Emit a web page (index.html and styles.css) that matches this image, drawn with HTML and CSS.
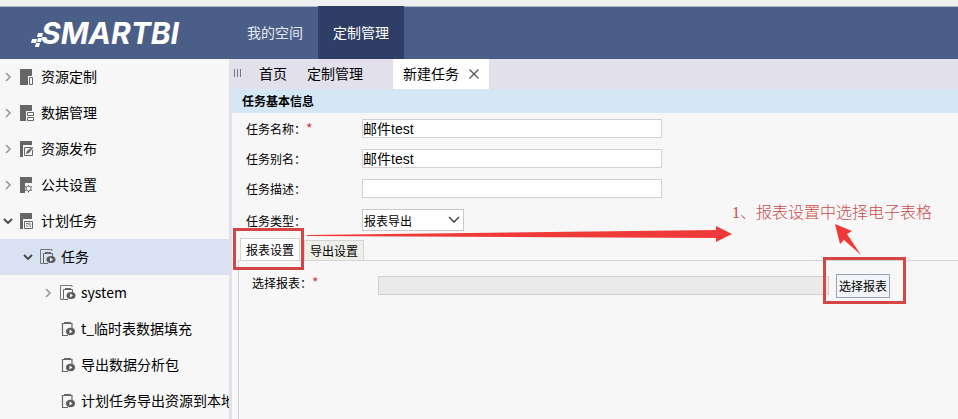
FILE: index.html
```html
<!DOCTYPE html>
<html lang="zh-CN">
<head>
    <meta charset="utf-8">
    <title>SMARTBI</title>
    <link rel="stylesheet" href="styles.css">
</head>
<body>
    <svg class="symbols" width="0" height="0">
        <symbol id="right" viewBox="0 0 10 10"><path d="M3 1l4 4-4 4" fill="none" stroke="#999" stroke-width="1.6"/></symbol>
        <symbol id="down" viewBox="0 0 10 10"><path d="M1 3l4 4 4-4" fill="none" stroke="#444" stroke-width="1.8"/></symbol>
        <symbol id="folder" viewBox="0 0 16 16">
            <path d="M3 14.500H.5V.5H12V2" fill="none" stroke="#777"/>
            <path d="M8 14.500H3.500V4.500h9V8" fill="none" stroke="#666"/>
            <path d="M5 3h6v2H5z" fill="#666"/>
            <ellipse cx="11" cy="10.500" rx="4.500" ry="3.500" fill="#5c5c5c"/>
            <path d="M10 8.500v4l3-2z" fill="#fff"/>
        </symbol>
        <symbol id="task" viewBox="0 0 16 16">
            <path d="M8 14.500H2.500V2.500H12V7" fill="none" stroke="#666" stroke-width="1.200"/>
            <path d="M4 1h7v2H4z" fill="#666"/>
            <ellipse cx="10.500" cy="10.500" rx="4.500" ry="3.700" fill="#5c5c5c"/>
            <path d="M9.500 8.500v4l3-2z" fill="#fff"/>
        </symbol>
    </svg>

    <header class="header">
        <a class="logo" href="#">
            <svg class="logo-mark" width="13" height="14" viewBox="0 0 13 14" fill="#fff">
                <path d="M7 0h5l-1 4H6zM1 6h5L5 10H0zM7 5h4l-1 4H6zM5 10h4l-1 4H4z"/>
            </svg>
            <span>SMARTBI</span>
        </a>
        <nav class="nav">
            <a class="nav-item" href="#">我的空间</a>
            <a class="nav-item active" href="#">定制管理</a>
        </nav>
    </header>

    <div class="body">
        <aside class="sidebar">
            <a class="node" href="#">
                <svg class="arrow"><use href="#right"/></svg>
                <svg class="icon" viewBox="0 0 16 16"><path d="M0 0h12v7H8v9H0z" fill="#666"/><path d="M9.500 8.500h3v7h-3z" fill="none" stroke="#666"/></svg>
                <span>资源定制</span>
            </a>
            <a class="node" href="#">
                <svg class="arrow"><use href="#right"/></svg>
                <svg class="icon" viewBox="0 0 16 16"><path d="M0 0h12v6H6v10H0z" fill="#666"/><path d="M7.500 7.500h6v3h-6zM7.500 12.500h6v3h-6z" fill="none" stroke="#666"/></svg>
                <span>数据管理</span>
            </a>
            <a class="node" href="#">
                <svg class="arrow"><use href="#right"/></svg>
                <svg class="icon" viewBox="0 0 16 16"><path d="M0 0h12v4H3v12H0z" fill="#666"/><path d="M11 6.500H4.500v8h8V9M6.500 12.500l6-6" fill="none" stroke="#666"/><path d="M6 13l1-3 5-4 1 1-4 5z" fill="#666"/></svg>
                <span>资源发布</span>
            </a>
            <a class="node" href="#">
                <svg class="arrow"><use href="#right"/></svg>
                <svg class="icon" viewBox="0 0 16 16"><path d="M0 0h12v6H5v10H0z" fill="#666"/><circle cx="8.500" cy="11.500" r="2.500" fill="none" stroke="#666"/><path d="M8.500 8v1M8.500 14v1.500M5 9.500l1 .5M11 13l1 .5M5 13.500l1-.5M11 10l1-.5" stroke="#666"/></svg>
                <span>公共设置</span>
            </a>
            <a class="node" href="#">
                <svg class="arrow"><use href="#down"/></svg>
                <svg class="icon" viewBox="0 0 16 16"><path d="M0 0h12v6H3v10H0z" fill="#666"/><path d="M4.500 8.500h8v7h-8zM6 10.500c3 0 4 1 4.500 3.500M6 12.500c1 0 1.500.5 2 1.500M9 9.500l2 2" fill="none" stroke="#666"/></svg>
                <span>计划任务</span>
            </a>
            <a class="node level-2 selected" href="#">
                <svg class="arrow"><use href="#down"/></svg>
                <svg class="icon"><use href="#folder"/></svg>
                <span>任务</span>
            </a>
            <a class="node level-3" href="#">
                <svg class="arrow"><use href="#right"/></svg>
                <svg class="icon"><use href="#folder"/></svg>
                <span>system</span>
            </a>
            <a class="node level-3" href="#">
                <svg class="arrow"></svg>
                <svg class="icon"><use href="#task"/></svg>
                <span>t_临时表数据填充</span>
            </a>
            <a class="node level-3" href="#">
                <svg class="arrow"></svg>
                <svg class="icon"><use href="#task"/></svg>
                <span>导出数据分析包</span>
            </a>
            <a class="node level-3" href="#">
                <svg class="arrow"></svg>
                <svg class="icon"><use href="#task"/></svg>
                <span>计划任务导出资源到本地</span>
            </a>
        </aside>

        <main class="main">
            <div class="tabs">
                <svg class="grip" width="8" height="8" viewBox="0 0 8 8"><path d="M.5 0v8M3.500 0v8M6.500 0v8" stroke="#777"/></svg>
                <a class="tab" href="#">首页</a>
                <a class="tab" href="#">定制管理</a>
                <div class="tab current">
                    <span>新建任务</span>
                    <button class="close" aria-label="关闭">
                        <svg width="10" height="10" viewBox="0 0 10 10"><path d="M.5.5l9 9M9.500.5l-9 9" stroke="#555" stroke-width="1.300"/></svg>
                    </button>
                </div>
            </div>

            <div class="content">
                <h2 class="title">任务基本信息</h2>
                <form class="form">
                    <div class="row">
                        <label for="name">任务名称：<em>*</em></label>
                        <input type="text" id="name" value="邮件test">
                    </div>
                    <div class="row">
                        <label for="alias">任务别名：</label>
                        <input type="text" id="alias" value="邮件test">
                    </div>
                    <div class="row">
                        <label for="desc">任务描述：</label>
                        <input type="text" id="desc">
                    </div>
                    <div class="row type-row">
                        <label for="type">任务类型：</label>
                        <div class="select">
                            <select id="type"><option>报表导出</option></select>
                            <svg width="12" height="8" viewBox="0 0 12 8"><path d="M1 1l5 5 5-5" fill="none" stroke="#333" stroke-width="1.300"/></svg>
                        </div>
                    </div>

                    <div class="sub-tabs">
                        <button type="button" class="sub-tab on">报表设置</button>
                        <button type="button" class="sub-tab">导出设置</button>
                    </div>
                    <div class="panel">
                        <label for="report">选择报表：<em>*</em></label>
                        <input type="text" id="report" disabled>
                        <button type="button" class="choose">选择报表</button>
                    </div>
                </form>

                <!-- notes drawn over the form -->
                <div class="box box-tab"></div>
                <div class="box box-button"></div>
                <svg class="arrows" width="640" height="60" viewBox="0 0 640 60" fill="#f03a3a">
                    <path d="M0 15L409 10V6l16 8-16 8v-4L0 16z"/>
                    <path d="M528 4l17 7-5 3 14 21-17-15-4 4z"/>
                </svg>
                <p class="note">1、报表设置中选择电子表格</p>
            </div>
        </main>
    </div>
</body>
</html>
```
FILE: styles.css
```css
* {
    box-sizing: border-box;
}
body {
    margin: 0;
    min-height: 100vh;
    display: flex;
    flex-direction: column;
    overflow: hidden;
    background-color: #f7f7f7;
    color: #000;
    font-family: "Noto Sans CJK SC", sans-serif;
    font-size: 14px;
}
a {
    color: inherit;
    text-decoration: none;
}
button, input, select {
    font-family: inherit;
    color: inherit;
    margin: 0;
}
.symbols {
    position: absolute;
}

/* header */
.header {
    display: flex;
    height: 59px;
    border-top: 6px solid #f0f0f0;
    box-shadow: inset 0 1px 0 #a9b6c6;
    background-color: #4b5e88;
    color: #fff;
}
.logo {
    display: flex;
    align-items: center;
    width: 232px;
    padding-left: 31px;
    font-family: Inter, sans-serif;
    font-size: 30px;
    font-weight: 700;
    font-style: italic;
    line-height: 50px;
}
.logo-mark {
    margin-top: 14px;
    margin-right: -3px;
}
.nav {
    display: flex;
}
.nav-item {
    padding: 0 15px;
    line-height: 52px;
    color: #e4e8f2;
}
.nav-item.active {
    background-color: #2f3e66;
    color: #fff;
}

/* tree */
.body {
    display: flex;
    flex: 1;
}
.sidebar {
    width: 229px;
    flex-shrink: 0;
    overflow: hidden;
}
.node {
    display: flex;
    align-items: center;
    height: 36px;
    padding-left: 3px;
    white-space: nowrap;
}
.node span {
    padding-bottom: 2px;
}
.level-2 {
    padding-left: 23px;
}
.level-3 {
    padding-left: 43px;
}
.selected {
    background-color: #d9e2f2;
}
.arrow {
    width: 10px;
    height: 10px;
    margin-right: 7px;
    flex-shrink: 0;
}
.icon {
    width: 16px;
    height: 16px;
    margin-right: 5px;
    flex-shrink: 0;
}

/* page tabs */
.main {
    flex: 1;
    min-width: 0;
    display: flex;
    flex-direction: column;
}
.tabs {
    display: flex;
    height: 30px;
    padding-left: 5px;
    background-color: #e1e0eb;
    line-height: 28px;
}
.grip {
    margin-top: 10px;
    margin-right: 7px;
}
.tab {
    padding: 0 10px;
}
.tab.current {
    display: flex;
    gap: 10px;
    margin-left: 20px;
    background-color: #fff;
}
.close {
    display: flex;
    align-items: center;
    padding: 0;
    border: none;
    background: none;
}

/* form */
.content {
    position: relative;
    flex: 1;
    display: flex;
    flex-direction: column;
    border-left: 3px solid #e1e0eb;
    font-size: 12px;
}
.title {
    margin: 0;
    padding-left: 10px;
    background-color: #d5e6f5;
    font-size: 12px;
    line-height: 24px;
}
.form {
    flex: 1;
    display: flex;
    flex-direction: column;
}
.row {
    display: flex;
    align-items: center;
    height: 30px;
    padding-left: 14px;
}
.row label {
    width: 116px;
}
em {
    color: #d33;
    font-size: 14px;
    font-style: normal;
    line-height: 12px;
}
.row input, .panel input {
    width: 300px;
    height: 19px;
    padding: 0;
    border: 1px solid #d3d0cf;
    background-color: #fff;
    font-family: "Liberation Sans", "Noto Sans CJK SC", sans-serif;
    font-size: 14px;
}
.type-row {
    height: 34px;
}
.select {
    display: flex;
    align-items: center;
}
.select select {
    appearance: none;
    width: 102px;
    height: 22px;
    padding: 0 1px;
    border: 1px solid #c8c8c8;
    border-radius: 0;
    background-color: #fff;
    font-size: 12px;
}
.select svg {
    margin-left: -16px;
    pointer-events: none;
}
.sub-tabs {
    display: flex;
    align-items: flex-end;
    gap: 4px;
    padding-left: 8px;
    height: 23px;
}
.sub-tab {
    height: 20px;
    padding: 0 5px;
    border: 1px solid #d4d4d4;
    border-bottom: none;
    background-color: #efefe9;
    font-size: 12px;
    line-height: 18px;
}
.sub-tab.on {
    height: 22px;
    background-color: #fff;
}
.panel {
    flex: 1;
    display: flex;
    align-items: flex-start;
    margin-left: 6px;
    padding: 13px 0 0 13px;
    border: 1px solid #d4d4d4;
    border-width: 1px 0 0 1px;
}
.panel label {
    width: 126px;
    line-height: 18px;
}
.panel input {
    width: 451px;
    margin-top: 2px;
    background-color: #eaeaea;
}
.choose {
    height: 24px;
    margin-left: 7px;
    padding: 0 2px 2px;
    border: 1px solid #98a3b5;
    background-color: #f2f4f7;
    font-size: 12px;
}

/* notes */
.box {
    position: absolute;
    border: 3px solid #d54545;
}
.box-tab {
    left: 1px;
    top: 139px;
    width: 71px;
    height: 42px;
}
.box-button {
    left: 591px;
    top: 168px;
    width: 83px;
    height: 47px;
}
.arrows {
    position: absolute;
    left: 75px;
    top: 131px;
    pointer-events: none;
}
.note {
    position: absolute;
    left: 500px;
    top: 112px;
    margin: 0;
    color: #c94b4b;
    font-family: "Liberation Serif", "Noto Sans CJK SC", serif;
    font-size: 16px;
    font-weight: 300;
    line-height: 24px;
    white-space: nowrap;
}
```
